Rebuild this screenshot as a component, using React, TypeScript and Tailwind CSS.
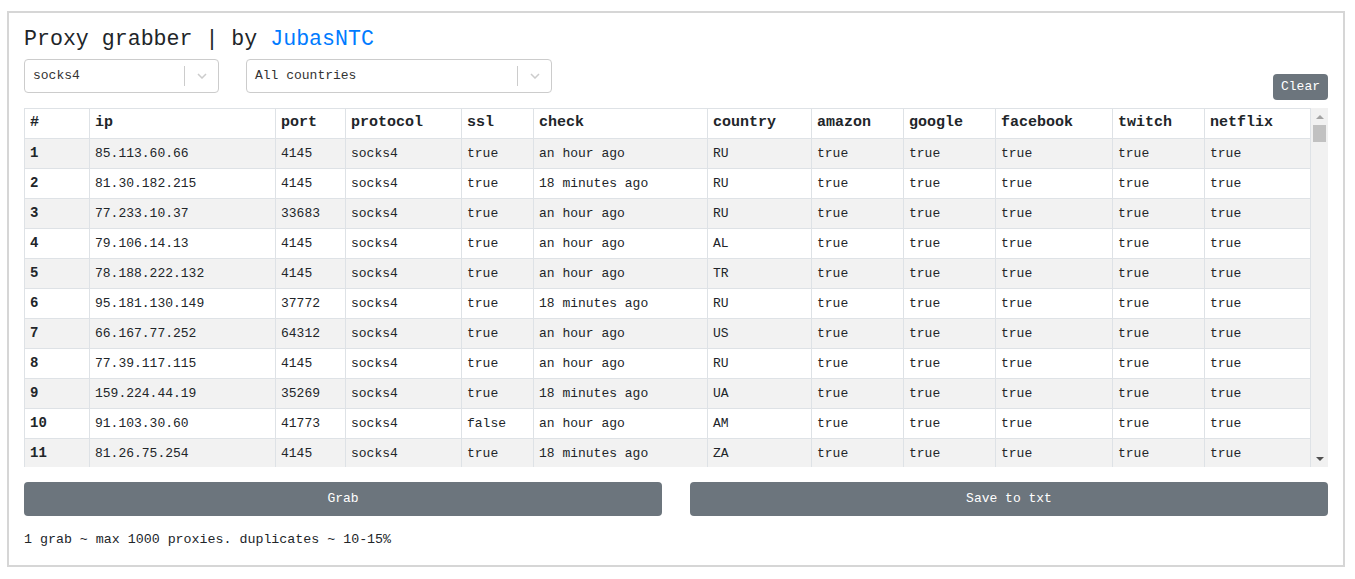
const rows = [
  ['85.113.60.66', '4145', 'true', 'an hour ago', 'RU'],
  ['81.30.182.215', '4145', 'true', '18 minutes ago', 'RU'],
  ['77.233.10.37', '33683', 'true', 'an hour ago', 'RU'],
  ['79.106.14.13', '4145', 'true', 'an hour ago', 'AL'],
  ['78.188.222.132', '4145', 'true', 'an hour ago', 'TR'],
  ['95.181.130.149', '37772', 'true', '18 minutes ago', 'RU'],
  ['66.167.77.252', '64312', 'true', 'an hour ago', 'US'],
  ['77.39.117.115', '4145', 'true', 'an hour ago', 'RU'],
  ['159.224.44.19', '35269', 'true', '18 minutes ago', 'UA'],
  ['91.103.30.60', '41773', 'false', 'an hour ago', 'AM'],
  ['81.26.75.254', '4145', 'true', '18 minutes ago', 'ZA'],
];

const headers = ['#', 'ip', 'port', 'protocol', 'ssl', 'check', 'country', 'amazon', 'google', 'facebook', 'twitch', 'netflix'];
const widths = ['w-[65px]', 'w-[186px]', 'w-[70px]', 'w-[116px]', 'w-[72px]', 'w-[174px]', 'w-[104px]', 'w-[92px]', 'w-[92px]', 'w-[117px]', 'w-[92px]', ''];

function Select({ value, width }: { value: string; width: string }) {
  return (
    <div className={`flex h-[34px] items-center rounded-[4px] border border-[#cccccc] bg-white ${width}`}>
      <span className="flex-1 pl-[8px] text-[13px] text-[#333333]">{value}</span>
      <span className="h-[20px] w-px bg-[#cccccc]" />
      <span className="flex w-[33px] items-center justify-center">
        <svg width="10" height="6" viewBox="0 0 10 6" fill="none">
          <path d="M1 1l4 4 4-4" stroke="#cccccc" strokeWidth="1.5" />
        </svg>
      </span>
    </div>
  );
}

function Scrollbar() {
  return (
    <div className="flex w-[17px] shrink-0 flex-col bg-[#f1f1f1]">
      <div className="flex h-[17px] items-center justify-center">
        <svg width="8" height="4" viewBox="0 0 8 4">
          <path d="M0 4L4 0L8 4Z" fill="#a3a3a3" />
        </svg>
      </div>
      <div className="flex-1 px-[2px]">
        <div className="h-[17px] bg-[#c1c1c1]" />
      </div>
      <div className="flex h-[17px] items-center justify-center">
        <svg width="8" height="4" viewBox="0 0 8 4">
          <path d="M0 0L8 0L4 4Z" fill="#505050" />
        </svg>
      </div>
    </div>
  );
}

export default function App() {
  return (
    <div className="bg-white pt-[11px] pl-[7px] font-['Liberation_Mono','DejaVu_Sans_Mono',monospace] text-[#212529]">
      <div className="w-[1338px] border-2 border-[#d6d6d6] px-[15px] pt-[13px] pb-[15px]">
        <h4 className="text-[21.6px] leading-[26px]">
          Proxy grabber | by <span className="text-[#007bff]">JubasNTC</span>
        </h4>

        <div className="mt-[7px] flex items-start justify-between">
          <div className="flex gap-[27px]">
            <Select value="socks4" width="w-[195px]" />
            <Select value="All countries" width="w-[306px]" />
          </div>
          <button className="mt-[15px] h-[26px] rounded-[4px] bg-[#6c757d] px-[8px] text-[13px] text-white">
            Clear
          </button>
        </div>

        <div className="mt-[8px] flex h-[359px] overflow-hidden">
          <div className="flex-1 overflow-hidden">
            <table className="w-full table-fixed border-collapse text-[13px]">
              <thead>
                <tr className="h-[30px] bg-white">
                  {headers.map((h, i) => (
                    <th key={h} className={`border border-[#dee2e6] px-[5px] text-left text-[15px] font-bold ${widths[i]}`}>
                      {h}
                    </th>
                  ))}
                </tr>
              </thead>
              <tbody>
                {rows.map((r, i) => (
                  <tr key={i} className={`h-[30px] ${i % 2 === 0 ? 'bg-[#f2f2f2]' : 'bg-white'}`}>
                    <td className="border border-[#dee2e6] px-[5px] text-[14px] font-bold">{i + 1}</td>
                    <td className="border border-[#dee2e6] px-[5px]">{r[0]}</td>
                    <td className="border border-[#dee2e6] px-[5px]">{r[1]}</td>
                    <td className="border border-[#dee2e6] px-[5px]">socks4</td>
                    <td className="border border-[#dee2e6] px-[5px]">{r[2]}</td>
                    <td className="border border-[#dee2e6] px-[5px]">{r[3]}</td>
                    <td className="border border-[#dee2e6] px-[5px]">{r[4]}</td>
                    <td className="border border-[#dee2e6] px-[5px]">true</td>
                    <td className="border border-[#dee2e6] px-[5px]">true</td>
                    <td className="border border-[#dee2e6] px-[5px]">true</td>
                    <td className="border border-[#dee2e6] px-[5px]">true</td>
                    <td className="border border-[#dee2e6] px-[5px]">true</td>
                  </tr>
                ))}
              </tbody>
            </table>
          </div>
          <Scrollbar />
        </div>

        <div className="mt-[15px] flex gap-[28px]">
          <button className="h-[34px] flex-1 rounded-[4px] bg-[#6c757d] text-[13px] text-white">Grab</button>
          <button className="h-[34px] flex-1 rounded-[4px] bg-[#6c757d] text-[13px] text-white">Save to txt</button>
        </div>

        <p className="mt-[14px] text-[13.3px] leading-[20px]">1 grab ~ max 1000 proxies. duplicates ~ 10-15%</p>
      </div>
    </div>
  );
}
